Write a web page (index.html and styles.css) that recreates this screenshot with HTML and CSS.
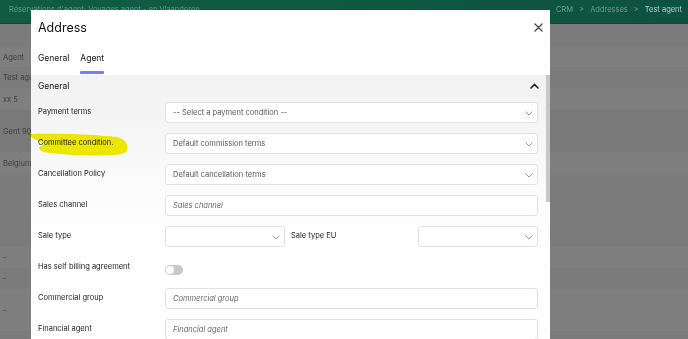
FILE: index.html
```html
<!DOCTYPE html>
<html>
<head>
<meta charset="utf-8">
<link rel="stylesheet" href="styles.css">
</head>
<body>
<div class="page">
  <header class="topbar">
    <span class="app-title">Réservations d'agent: Voyages agent - en Vlaanderen</span>
    <nav class="crumbs">
      <span>CRM</span><span class="sep">&gt;</span><span>Addresses</span><span class="sep">&gt;</span><span class="cur">Test agent</span>
    </nav>
  </header>
  <div class="list">
    <div class="lrow r-a h23"></div>
    <div class="lrow r-b h20">Agent</div>
    <div class="lrow r-a h21">Test agent</div>
    <div class="lrow r-b h22">xx 5</div>
    <div class="lrow r-c h42">Gent 9000</div>
    <div class="lrow r-b h22">Belgium</div>
    <div class="lrow r-a h72"></div>
    <div class="lrow r-b h22">-</div>
    <div class="lrow r-a h21">-</div>
    <div class="lrow r-b h42">-</div>
  </div>
</div>

<div class="modal">
  <div class="modal-head">
    <h1 class="modal-title">Address</h1>
    <svg class="close" width="9" height="9" viewBox="0 0 9 9"><path d="M1 1L8 8M8 1L1 8" stroke="#4a4a4a" stroke-width="1.4" stroke-linecap="round"/></svg>
  </div>
  <div class="tabs">
    <div class="tab">General</div>
    <div class="tab active">Agent</div>
  </div>
  <div class="modal-body">
    <div class="section-head">
      <span>General</span>
      <svg width="9" height="6" viewBox="0 0 9 6"><path d="M1 5L4.5 1.5L8 5" fill="none" stroke="#222" stroke-width="1.6" stroke-linecap="round"/></svg>
    </div>
    <div class="form">
      <div class="frow">
        <label class="lbl">Payment terms</label>
        <div class="field select">-- Select a payment condition --<svg class="chev" width="8" height="5" viewBox="0 0 8 5"><path d="M0.5 0.5L4 4L7.5 0.5" fill="none" stroke="#9a9a9a" stroke-width="1"/></svg></div>
      </div>
      <div class="frow">
        <label class="lbl">Committee condition.</label>
        <div class="field select">Default commission terms<svg class="chev" width="8" height="5" viewBox="0 0 8 5"><path d="M0.5 0.5L4 4L7.5 0.5" fill="none" stroke="#9a9a9a" stroke-width="1"/></svg></div>
      </div>
      <div class="frow">
        <label class="lbl">Cancellation Policy</label>
        <div class="field select">Default cancellation terms<svg class="chev" width="8" height="5" viewBox="0 0 8 5"><path d="M0.5 0.5L4 4L7.5 0.5" fill="none" stroke="#9a9a9a" stroke-width="1"/></svg></div>
      </div>
      <div class="frow">
        <label class="lbl">Sales channel</label>
        <div class="field ph">Sales channel</div>
      </div>
      <div class="frow">
        <label class="lbl">Sale type</label>
        <div class="split">
          <div class="field select"><svg class="chev" width="8" height="5" viewBox="0 0 8 5"><path d="M0.5 0.5L4 4L7.5 0.5" fill="none" stroke="#9a9a9a" stroke-width="1"/></svg></div>
          <label class="lbl sub">Sale type EU</label>
          <div class="field select"><svg class="chev" width="8" height="5" viewBox="0 0 8 5"><path d="M0.5 0.5L4 4L7.5 0.5" fill="none" stroke="#9a9a9a" stroke-width="1"/></svg></div>
        </div>
      </div>
      <div class="frow">
        <label class="lbl">Has self billing agreement</label>
        <div class="toggle"><span class="knob"></span></div>
      </div>
      <div class="frow">
        <label class="lbl">Commercial group</label>
        <div class="field ph">Commercial group</div>
      </div>
      <div class="frow">
        <label class="lbl">Financial agent</label>
        <div class="field ph">Financial agent</div>
      </div>
    </div>
  </div>
  <div class="scrollbar"></div>
</div>

<svg class="marker" width="688" height="339" viewBox="0 0 688 339">
  <path d="M27 134 C50 133 95 134 116 137 C129 139 131 152 122 154 C100 157 62 155 44 152 C37 150 38 146 45 144 C38 141 32 138 27 134 Z" fill="#f4ee00"/>
</svg>
</body>
</html>
```

FILE: styles.css
```css
* { box-sizing: border-box; }
html, body {
  margin: 0;
  padding: 0;
  width: 688px;
  height: 339px;
  overflow: hidden;
}
body {
  font-family: Inter, "Liberation Sans", sans-serif;
  background: #7b7b7b;
  position: relative;
}
.page {
  display: flex;
  flex-direction: column;
  height: 339px;
}
.topbar {
  height: 24px;
  flex-shrink: 0;
  background: linear-gradient(90deg, #105c43, #0f5840 60%, #0d5240);
  display: flex;
  justify-content: space-between;
  align-items: flex-start;
  padding: 5px 6px 0 9px;
  font-size: 7.5px;
  border-bottom: 1px solid #0a4a36;
}
.app-title { color: #5f9e83; }
.crumbs { display: flex; gap: 6px; color: #6e9c8a; }
.crumbs .sep { color: #6e9c8a; }
.crumbs .cur { color: #b9cfc6; }
.list {
  display: flex;
  flex-direction: column;
}
.lrow {
  flex-shrink: 0;
  padding-left: 3px;
  display: flex;
  align-items: center;
  font-size: 7.5px;
  color: #3e3e3e;
}
.h20 { height: 20px; }
.h21 { height: 21px; }
.h22 { height: 22px; }
.h23 { height: 23px; }
.h42 { height: 42px; }
.h72 { height: 72px; }
.r-a { background: #7b7b7b; }
.r-b { background: #7f7f7f; }
.r-c { background: #797979; }

.modal {
  position: absolute;
  left: 31px;
  top: 10px;
  width: 519px;
  height: 360px;
  background: #fff;
  display: flex;
  flex-direction: column;
}
.modal-head {
  height: 35px;
  display: flex;
  align-items: center;
  justify-content: space-between;
  padding: 0 7px 0 7px;
}
.modal-title {
  margin: 0;
  font-size: 12.5px;
  font-weight: 400;
  color: #111;
}
.tabs {
  height: 30px;
  display: flex;
  gap: 11px;
  padding-left: 7px;
}
.tab {
  font-size: 8.5px;
  color: #111;
  padding-top: 8px;
  line-height: 10px;
  height: 29px;
}
.tab.active {
  position: relative;
}
.tab.active::after {
  content: "";
  position: absolute;
  left: 0;
  right: 0;
  top: 26px;
  height: 3px;
  border-radius: 1px;
  background: #7080f2;
}
.modal-body {
  flex: 1;
  background: linear-gradient(#f2f2f2 0, #f4f4f4 40px, #fbfbfb 110px, #ffffff 170px);
}
.section-head {
  height: 22px;
  display: flex;
  align-items: center;
  justify-content: space-between;
  padding: 0 11px 0 7px;
  font-size: 8.5px;
  color: #111;
}
.form {
  display: flex;
  flex-direction: column;
  padding-right: 12px;
}
.frow {
  height: 31px;
  display: grid;
  grid-template-columns: 127px 1fr;
  align-items: center;
  padding-left: 7px;
}
.lbl {
  font-size: 7.5px;
  color: #222;
  padding-bottom: 2px;
}
.field {
  height: 21px;
  border: 1px solid #e1e1e1;
  border-radius: 3px;
  background: #fff;
  display: flex;
  align-items: center;
  padding: 0 7px;
  font-size: 7.5px;
  color: #555;
  position: relative;
}
.ph { font-style: italic; color: #666; }
.select .chev {
  position: absolute;
  right: 4px;
  top: 8px;
}
.split {
  display: grid;
  grid-template-columns: 120px 1fr 120px;
  align-items: center;
}
.split .sub { padding-left: 6px; padding-bottom: 3px; }
.toggle {
  width: 18px;
  height: 10px;
  border-radius: 5px;
  background: #c9c9c9;
  position: relative;
  margin-top: 4px;
}
.knob {
  position: absolute;
  left: 1px;
  top: 1px;
  width: 8px;
  height: 8px;
  border-radius: 50%;
  background: #fff;
}
.scrollbar {
  position: absolute;
  right: 0;
  top: 65px;
  width: 4px;
  height: 127px;
  background: #c8c8c8;
}
.marker {
  position: absolute;
  left: 0;
  top: 0;
  mix-blend-mode: multiply;
  pointer-events: none;
}
```
